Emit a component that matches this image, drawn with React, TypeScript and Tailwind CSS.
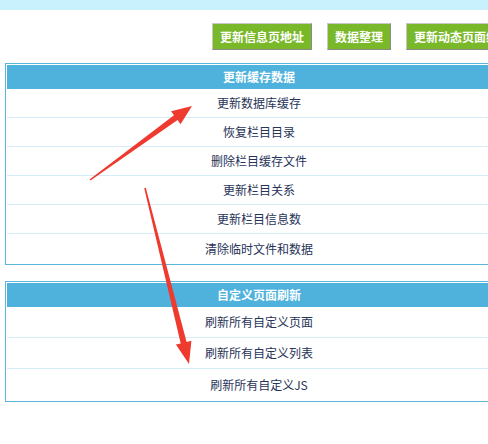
import React from 'react';

const cacheItems = ['更新数据库缓存', '恢复栏目目录', '删除栏目缓存文件', '更新栏目关系', '更新栏目信息数', '清除临时文件和数据'];
const customItems = ['刷新所有自定义页面', '刷新所有自定义列表', '刷新所有自定义JS'];

const font = { fontFamily: '"Microsoft YaHei", "Noto Sans CJK SC", sans-serif' };

function Panel({ title, items, rowH }: { title: string; items: string[]; rowH: string }) {
    return (
        <div className="ml-[5px] w-[508px] shrink-0 border border-[#5db6da] p-[1px]">
            <div className="flex h-[24px] items-center justify-center bg-[#4fb2dd] text-[12px] font-bold text-white">{title}</div>
            {items.map((item, i) => (
                <div
                    key={item}
                    className={`flex items-center justify-center text-[12px] text-[#283358] ${rowH} ${i < items.length - 1 ? 'border-b border-[#d3ecf5]' : ''}`}
                >
                    {item}
                </div>
            ))}
        </div>
    );
}

export default function App() {
    return (
        <div className="relative h-[444px] w-[488px] overflow-hidden bg-white" style={font}>
            <div className="h-[10px] bg-[#c9f0fd]" />

            {/* top buttons */}
            <div className="mt-[13px] flex gap-[15px] pl-[212px]">
                {['更新信息页地址', '数据整理', '更新动态页面缓存'].map((b) => (
                    <button
                        key={b}
                        className="h-[27px] shrink-0 whitespace-nowrap border border-t-[#c8c8c8] border-l-[#c8c8c8] border-r-[#8a8a8a] border-b-[#8a8a8a] bg-[#79b829] px-[7px] text-[12px] font-bold text-white"
                    >
                        {b}
                    </button>
                ))}
            </div>

            <div className="mt-[13px] w-[520px]">
                <Panel title="更新缓存数据" items={cacheItems} rowH="h-[29px]" />
            </div>
            <div className="mt-[16px] w-[520px]">
                <Panel title="自定义页面刷新" items={customItems} rowH="h-[31px]" />
            </div>

            {/* annotation arrows */}
            <svg className="pointer-events-none absolute left-0 top-0" width="488" height="444" viewBox="0 0 488 444">
                <polygon
                    fill="#ef3a2f"
                    points="90.5,180.6 177.6,120.1 180.5,124.2 192,106 171.1,111.2 174,115.3 89.5,179.4"
                />
                <polygon
                    fill="#ef3a2f"
                    points="145.8,187.8 186.6,341.9 191.4,340.7 189,364 175.9,344.6 180.7,343.4 144.2,188.2"
                />
            </svg>
        </div>
    );
}
